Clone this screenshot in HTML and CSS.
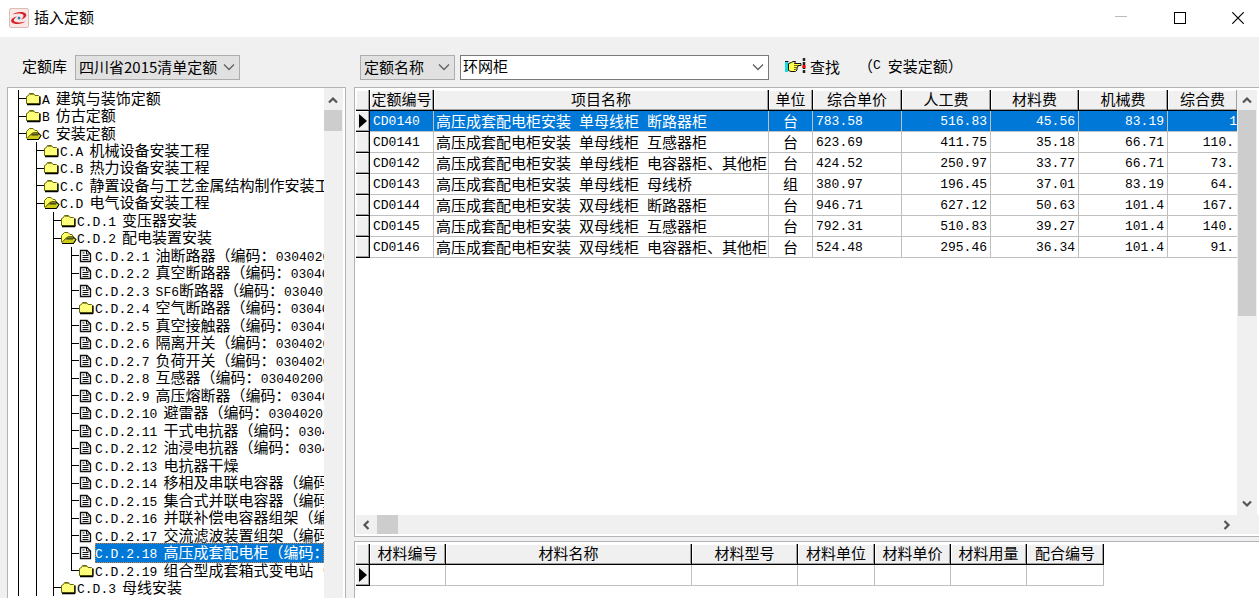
FILE: index.html
```html
<!DOCTYPE html>
<html lang="zh-CN">
<head>
<meta charset="utf-8">
<title>插入定额</title>
<link rel="stylesheet" href="styles.css">
</head>
<body>
<svg class="defs" aria-hidden="true">
  <defs>
    <pattern id="dither" width="2" height="2" patternUnits="userSpaceOnUse"><rect width="2" height="2" fill="#ffff4d"/><rect width="1" height="1" fill="#ffffa8"/><rect x="1" y="1" width="1" height="1" fill="#ffffa8"/></pattern>
    <symbol id="folder" viewBox="0 0 16 14"><path d="M.5 11.5V4.500L2.500 3.500L3.500 1.500H7.500L9 3.500H12.500L13.500 4.500V11.500Z" fill="url(#dither)" stroke="#66660a"/><path d="M3.500 2.500H8" stroke="#99992a"/><path d="M1 12.500H13.500L14 12V4.500" fill="none" stroke="#000" stroke-width="1.300"/></symbol>
    <symbol id="open" viewBox="0 0 16 14"><path d="M.5 11V4.500L3.500 1.500H7L9 3.500H11L12.500 6" fill="#ffff66" stroke="#66660a"/><path d="M1 11.500L4.500 7.500L7.500 5.500H12L15 8.500L12.500 12.500H2Z" fill="#cccc18" stroke="#66660a"/><path d="M1 12.500H12.500L15 8.500L12 6" fill="none" stroke="#000"/><path d="M5 8.500L7 6.500V8.500L9 6.500V8.500L11 6.500V8.500L12.500 7" stroke="#222" fill="none"/></symbol>
    <symbol id="doc" viewBox="0 0 16 14"><path d="M1.500 1.500H8L11.500 5V12.500H1.500Z" fill="#fff" stroke="#111" stroke-width="1.300"/><path d="M7.500 1.500V5H11.500M3.500 4H5.500M3.500 6.500H9.500M3.500 8.500H9.500M3.500 10.500H9.500" fill="none" stroke="#111"/></symbol>
    <symbol id="down" viewBox="0 0 12 8"><path d="M1 1.500L6 6.500L11 1.500" fill="none" stroke="currentColor" stroke-width="1.300"/></symbol>
    <symbol id="arrow" viewBox="0 0 10 10"><path d="M1 7.500L5 3.500L9 7.500" fill="none" stroke="#555" stroke-width="2.200"/></symbol>
  </defs>
</svg>
<div class="window">
  <header class="titlebar">
    <svg class="logo" viewBox="0 0 20 20"><rect x=".5" y=".5" width="19" height="19" rx="1.500" fill="#f9e8e4" stroke="#dcbcb6"/><path d="M3.500 6.500C7 3.500 15 3 17 6C18.500 8.500 14.500 11 12 11.500C14.500 9.500 15.500 7.500 13.500 6.300C11.500 5 7 5.500 3.500 6.500Z" fill="#d61f26"/><path d="M16.500 13.500C13 16.500 5 17 2.500 14C1 11.500 4.500 9.300 8 8.500C5 10.500 3.800 12.500 6 13.800C8.500 15 13 14.600 16.500 13.500Z" fill="#d61f26"/><circle cx="10" cy="10" r="1.500" fill="#3b86c8"/></svg>
    <h1>插入定额</h1>
    <div class="controls">
      <button aria-label="最小化" disabled><svg viewBox="0 0 12 12"><path d="M0 4.500H12" stroke="#bbb"/></svg></button>
      <button aria-label="最大化"><svg viewBox="0 0 12 12"><rect x=".5" y=".5" width="11" height="11" fill="none" stroke="#000"/></svg></button>
      <button aria-label="关闭"><svg viewBox="0 0 12 12"><path d="M.3 .3L11.700 11.700M11.700 .3L.3 11.700" stroke="#000" stroke-width="1.200"/></svg></button>
    </div>
  </header>
  <div class="content">
    <aside class="left">
      <div class="toolbar">
        <label for="lib">定额库</label>
        <div class="combo lib"><select id="lib"><option>四川省2015清单定额</option></select><svg><use href="#down"/></svg></div>
      </div>
      <div class="panel tree-panel">
        <ul class="tree">
          <li><div class="row"><svg><use href="#folder"/></svg><p><b>A</b>建筑与装饰定额</p></div></li>
          <li><div class="row"><svg><use href="#folder"/></svg><p><b>B</b>仿古定额</p></div></li>
          <li><div class="row"><svg><use href="#open"/></svg><p><b>C</b>安装定额</p></div>
            <ul class="wide">
              <li><div class="row"><svg><use href="#folder"/></svg><p><b>C.A</b>机械设备安装工程</p></div></li>
              <li><div class="row"><svg><use href="#folder"/></svg><p><b>C.B</b>热力设备安装工程</p></div></li>
              <li><div class="row"><svg><use href="#folder"/></svg><p><b>C.C</b>静置设备与工艺金属结构制作安装工</p></div></li>
              <li><div class="row"><svg><use href="#open"/></svg><p><b>C.D</b>电气设备安装工程</p></div>
                <ul>
                  <li><div class="row"><svg><use href="#folder"/></svg><p><b>C.D.1</b>变压器安装</p></div></li>
                  <li><div class="row"><svg><use href="#open"/></svg><p><b>C.D.2</b>配电装置安装</p></div>
                    <ul class="wide closed">
                      <li><div class="row"><svg><use href="#doc"/></svg><p><b>C.D.2.1</b>油断路器（编码：<i>0304020</i></p></div></li>
                      <li><div class="row"><svg><use href="#doc"/></svg><p><b>C.D.2.2</b>真空断路器（编码：<i>03040</i></p></div></li>
                      <li><div class="row"><svg><use href="#doc"/></svg><p><b>C.D.2.3</b><i>SF6</i>断路器（编码：<i>030402</i></p></div></li>
                      <li><div class="row"><svg><use href="#folder"/></svg><p><b>C.D.2.4</b>空气断路器（编码：<i>03040</i></p></div></li>
                      <li><div class="row"><svg><use href="#doc"/></svg><p><b>C.D.2.5</b>真空接触器（编码：<i>03040</i></p></div></li>
                      <li><div class="row"><svg><use href="#doc"/></svg><p><b>C.D.2.6</b>隔离开关（编码：<i>0304020</i></p></div></li>
                      <li><div class="row"><svg><use href="#doc"/></svg><p><b>C.D.2.7</b>负荷开关（编码：<i>0304020</i></p></div></li>
                      <li><div class="row"><svg><use href="#doc"/></svg><p><b>C.D.2.8</b>互感器（编码：<i>030402008</i></p></div></li>
                      <li><div class="row"><svg><use href="#doc"/></svg><p><b>C.D.2.9</b>高压熔断器（编码：<i>03040</i></p></div></li>
                      <li><div class="row"><svg><use href="#doc"/></svg><p><b>C.D.2.10</b>避雷器（编码：<i>03040201</i></p></div></li>
                      <li><div class="row"><svg><use href="#doc"/></svg><p><b>C.D.2.11</b>干式电抗器（编码：<i>0304</i></p></div></li>
                      <li><div class="row"><svg><use href="#doc"/></svg><p><b>C.D.2.12</b>油浸电抗器（编码：<i>0304</i></p></div></li>
                      <li><div class="row"><svg><use href="#doc"/></svg><p><b>C.D.2.13</b>电抗器干燥</p></div></li>
                      <li><div class="row"><svg><use href="#doc"/></svg><p><b>C.D.2.14</b>移相及串联电容器（编码</p></div></li>
                      <li><div class="row"><svg><use href="#doc"/></svg><p><b>C.D.2.15</b>集合式并联电容器（编码</p></div></li>
                      <li><div class="row"><svg><use href="#doc"/></svg><p><b>C.D.2.16</b>并联补偿电容器组架（编</p></div></li>
                      <li><div class="row"><svg><use href="#doc"/></svg><p><b>C.D.2.17</b>交流滤波装置组架（编码</p></div></li>
                      <li><div class="row"><svg><use href="#doc"/></svg><p class="selected"><b>C.D.2.18</b>高压成套配电柜（编码：</p></div></li>
                      <li><div class="row"><svg><use href="#folder"/></svg><p><b>C.D.2.19</b>组合型成套箱式变电站（</p></div></li>
                    </ul>
                  </li>
                  <li><div class="row"><svg><use href="#folder"/></svg><p><b>C.D.3</b>母线安装</p></div></li>
                </ul>
              </li>
            </ul>
          </li>
        </ul>
        <div class="vbar"><svg><use href="#arrow"/></svg><span class="thumb short"></span></div>
      </div>
    </aside>
    <main class="right">
      <form class="toolbar" onsubmit="return false">
        <div class="combo field"><select aria-label="查找字段"><option>定额名称</option></select><svg><use href="#down"/></svg></div>
        <div class="combo query"><input type="text" aria-label="查找内容" value="环网柜"><svg><use href="#down"/></svg></div>
        <button class="find"><svg viewBox="0 0 22 18"><path d="M0 5H3V15H0Z" fill="#18d8e0"/><path d="M0 4.500H3.500" stroke="#111"/><path d="M3.500 6.500L6.500 5.500L8 4.500H10.500L9.500 6.500H16V8.500H12.500L13 10L12 11V13L10.500 14.500H6L3.500 13.500Z" fill="#ffff50" stroke="#111"/><path d="M9 8.500H13M9 10.500H12.500M9 12.500H11.500" stroke="#6b6b10"/><path d="M19 1V17" stroke="#222" stroke-width="2.500" stroke-dasharray="3 1"/><path d="M19 8V11" stroke="#f00" stroke-width="3"/></svg>查找</button>
        <span class="scope">（<i>C</i><span>安装定额）</span></span>
      </form>
      <section class="panel quota">
        <div class="view">
          <table class="main-grid">
            <colgroup><col class="w14"><col class="w64"><col class="w335"><col class="w44"><col class="w89"><col class="w89"><col class="w88"><col class="w89"><col></colgroup>
            <thead><tr><th></th><th>定额编号</th><th>项目名称</th><th>单位</th><th>综合单价</th><th>人工费</th><th>材料费</th><th>机械费</th><th>综合费</th></tr></thead>
            <tbody>
              <tr class="current"><th><svg viewBox="0 0 8 14"><path d="M0 0L8 7L0 14Z"/></svg></th><td>CD0140</td><td><div><span>高压成套配电柜安装</span><span>单母线柜</span><span>断路器柜</span></div></td><td>台</td><td>783.58</td><td>516.83</td><td>45.56</td><td>83.19</td><td>1</td></tr>
              <tr><th></th><td>CD0141</td><td><div><span>高压成套配电柜安装</span><span>单母线柜</span><span>互感器柜</span></div></td><td>台</td><td>623.69</td><td>411.75</td><td>35.18</td><td>66.71</td><td>110.</td></tr>
              <tr><th></th><td>CD0142</td><td><div><span>高压成套配电柜安装</span><span>单母线柜</span><span>电容器柜、其他柜</span></div></td><td>台</td><td>424.52</td><td>250.97</td><td>33.77</td><td>66.71</td><td>73.</td></tr>
              <tr><th></th><td>CD0143</td><td><div><span>高压成套配电柜安装</span><span>单母线柜</span><span>母线桥</span></div></td><td>组</td><td>380.97</td><td>196.45</td><td>37.01</td><td>83.19</td><td>64.</td></tr>
              <tr><th></th><td>CD0144</td><td><div><span>高压成套配电柜安装</span><span>双母线柜</span><span>断路器柜</span></div></td><td>台</td><td>946.71</td><td>627.12</td><td>50.63</td><td>101.4</td><td>167.</td></tr>
              <tr><th></th><td>CD0145</td><td><div><span>高压成套配电柜安装</span><span>双母线柜</span><span>互感器柜</span></div></td><td>台</td><td>792.31</td><td>510.83</td><td>39.27</td><td>101.4</td><td>140.</td></tr>
              <tr><th></th><td>CD0146</td><td><div><span>高压成套配电柜安装</span><span>双母线柜</span><span>电容器柜、其他柜</span></div></td><td>台</td><td>524.48</td><td>295.46</td><td>36.34</td><td>101.4</td><td>91.</td></tr>
            </tbody>
          </table>
        </div>
        <div class="vbar"><svg><use href="#arrow"/></svg><span class="thumb long"></span><svg class="end"><use href="#arrow"/></svg></div>
        <div class="hbar"><svg class="west"><use href="#arrow"/></svg><span class="thumb"></span><svg class="east"><use href="#arrow"/></svg></div>
      </section>
      <section class="panel material">
        <table class="sub-grid">
          <colgroup><col class="w14"><col class="w76"><col class="w246"><col class="w106"><col class="w77"><col class="w76"><col class="w76"><col class="w77"></colgroup>
          <thead><tr><th></th><th>材料编号</th><th>材料名称</th><th>材料型号</th><th>材料单位</th><th>材料单价</th><th>材料用量</th><th>配合编号</th></tr></thead>
          <tbody><tr><th><svg viewBox="0 0 8 14"><path d="M0 0L8 7L0 14Z"/></svg></th><td></td><td></td><td></td><td></td><td></td><td></td><td></td></tr></tbody>
        </table>
      </section>
    </main>
  </div>
</div>
</body>
</html>
```
FILE: styles.css
```css
* { box-sizing: border-box; }
body {
  margin: 0;
  overflow: hidden;
  color: #000;
  font: 15px/17px "Noto Sans CJK SC", sans-serif;
}
button, select, input { font: inherit; color: inherit; }
.defs { position: absolute; width: 0; height: 0; }
.window { display: flex; flex-direction: column; height: 100vh; background: #f0f0f0; }

.titlebar { display: flex; align-items: center; flex: none; height: 37px; padding: 0 0 2px 9px; background: #fff; }
.logo { width: 20px; height: 20px; margin-right: 5px; }
.titlebar h1 { margin: 0; padding-bottom: 2px; font-size: 15px; font-weight: 400; line-height: 20px; }
.controls { display: flex; margin-left: auto; gap: 14px; }
.controls button { display: grid; place-items: center; width: 45px; height: 34px; padding: 0; border: 0; background: none; }
.controls button:last-child { width: 43px; }
.controls svg { width: 12px; height: 12px; }

.content { display: flex; flex: 1; min-height: 0; gap: 8px; padding-left: 7px; }
.left { display: flex; flex-direction: column; flex: none; width: 339px; }
.right { display: flex; flex-direction: column; flex: 1; min-width: 0; }
.toolbar { display: flex; align-items: center; flex: none; height: 50px; padding-top: 10px; }
.left .toolbar { gap: 8px; padding-left: 15px; }
.right .toolbar { gap: 5px; padding-left: 6px; }
.toolbar label, .scope { padding-bottom: 3px; }
.combo { display: flex; align-items: center; position: relative; height: 25px; }
.combo select, .combo input {
  width: 100%; height: 25px; margin: 0; padding: 0 20px 0 3px;
  border: 1px solid #adadad; border-radius: 0; appearance: none; background: #e1e1e1; line-height: 20px;
}
.combo input { padding: 0 20px 4px 2px; border-color: #7a7a7a; background: #fff; outline: 0; }
.combo svg { position: absolute; right: 5px; width: 12px; height: 8px; color: #606060; pointer-events: none; }
.lib { width: 165px; }
.field { width: 95px; }
.query { width: 309px; }
.find { display: flex; align-items: center; gap: 3px; margin-left: 11px; padding: 0 0 2px; border: 0; background: none; }
.find svg { width: 22px; height: 18px; }
.scope { display: flex; align-items: center; margin-left: 13px; }
.scope span { margin-left: 7px; }

i, b { font: 13px/17px "Liberation Mono", monospace; }

.panel { border: 1px solid #b4b4b8; background: #fff; }
.tree-panel { display: flex; flex: 1; min-height: 0; border-bottom: 0; overflow: hidden; }
.tree { flex: 1; min-width: 0; padding: 2px 0 0 10px; overflow: hidden; }
.tree-panel ul { margin: 0; list-style: none; }
.tree ul { padding-left: 17px; }
.tree ul.wide { padding-left: 18px; }
.tree li { position: relative; }
.tree li::before { content: ""; position: absolute; top: 0; bottom: 0; left: 0; border-left: 1px solid #000; }
.closed li:last-child::before { bottom: 8px; }
.row { display: flex; align-items: center; height: 17px; }
.tree li:nth-child(even) > .row { height: 18px; }
.row::before { content: ""; flex: none; width: 8px; border-top: 1px solid #000; }
.row svg { flex: none; width: 16px; height: 14px; }
.row p { flex: 1; min-width: 0; margin: 0; white-space: nowrap; }
.row b { margin-right: 6px; }
.row .selected { background: #0078d7; color: #fff; outline: 1px dotted #d8803a; outline-offset: -1px; }

.vbar { display: flex; flex-direction: column; align-items: center; flex: none; width: 21px; padding: 2px 2px 0 0; background: #f0f0f0; border-right: 2px solid #fff; }
.vbar svg, .hbar svg { flex: none; width: 10px; height: 10px; margin: 5px; }
.vbar .end { margin-top: auto; margin-bottom: 6px; transform: rotate(180deg); }
.thumb { display: block; background: #cdcdcd; }
.vbar .thumb { width: 18px; }
.short { height: 21px; }
.long { height: 206px; }

.quota { display: grid; grid-template: 1fr 19px / 1fr 22px; flex: 1; min-height: 0; padding: 2px 0 2px 1px; border-right: 0; }
.view { overflow: hidden; }
.quota .vbar { width: 22px; padding: 0; }
.hbar { grid-column: 1 / -1; display: flex; align-items: center; padding-right: 22px; background: #f0f0f0; }
.hbar .thumb { width: 21px; height: 19px; }
.hbar .west { margin-right: 6px; transform: rotate(-90deg); }
.hbar .east { margin-left: auto; transform: rotate(90deg); }
.material { flex: none; height: 57px; margin-top: 4px; padding: 2px 0 0 1px; border-right: 0; border-bottom: 0; }

table { table-layout: fixed; border-spacing: 0; }
.main-grid { width: 100%; }
.sub-grid { width: 748px; }
.w14 { width: 14px; }
.w44 { width: 44px; }
.w64 { width: 64px; }
.w76 { width: 76px; }
.w77 { width: 77px; }
.w88 { width: 88px; }
.w89 { width: 89px; }
.w106 { width: 106px; }
.w246 { width: 246px; }
.w335 { width: 335px; }
th, td { height: 21px; padding: 0; white-space: nowrap; font-weight: 400; line-height: 17px; }
th { border-right: 1px solid #000; border-bottom: 1px solid #000; background: #f0f0f0; box-shadow: inset -1px -1px #a0a0a0, inset 1px 1px #fff; }
thead th { padding-bottom: 3px; }
.main-grid thead th:last-child { border-right: 0; }
th svg { display: block; width: 8px; height: 14px; margin: 0 auto; }
td { padding: 0 3px; border-right: 1px solid #c0c0c0; border-bottom: 1px solid #c0c0c0; text-align: right; font-family: "Liberation Mono", "Noto Sans CJK SC", monospace; font-size: 13px; }
.main-grid td:nth-child(2), .main-grid td:nth-child(5) { text-align: left; }
.main-grid td:nth-child(3) { padding: 0 2px 2px; text-align: left; font-size: 15px; font-family: "Noto Sans CJK SC", sans-serif; }
.main-grid td:nth-child(3) div { display: flex; gap: 8px; }
.main-grid td:nth-child(4) { padding-bottom: 2px; text-align: center; font-size: 15px; font-family: "Noto Sans CJK SC", sans-serif; }
.main-grid td:last-child { border-right: 0; }
.current td { background: #0078d7; color: #fff; }
.main-grid .current td:last-child { padding-right: 0; }
```
